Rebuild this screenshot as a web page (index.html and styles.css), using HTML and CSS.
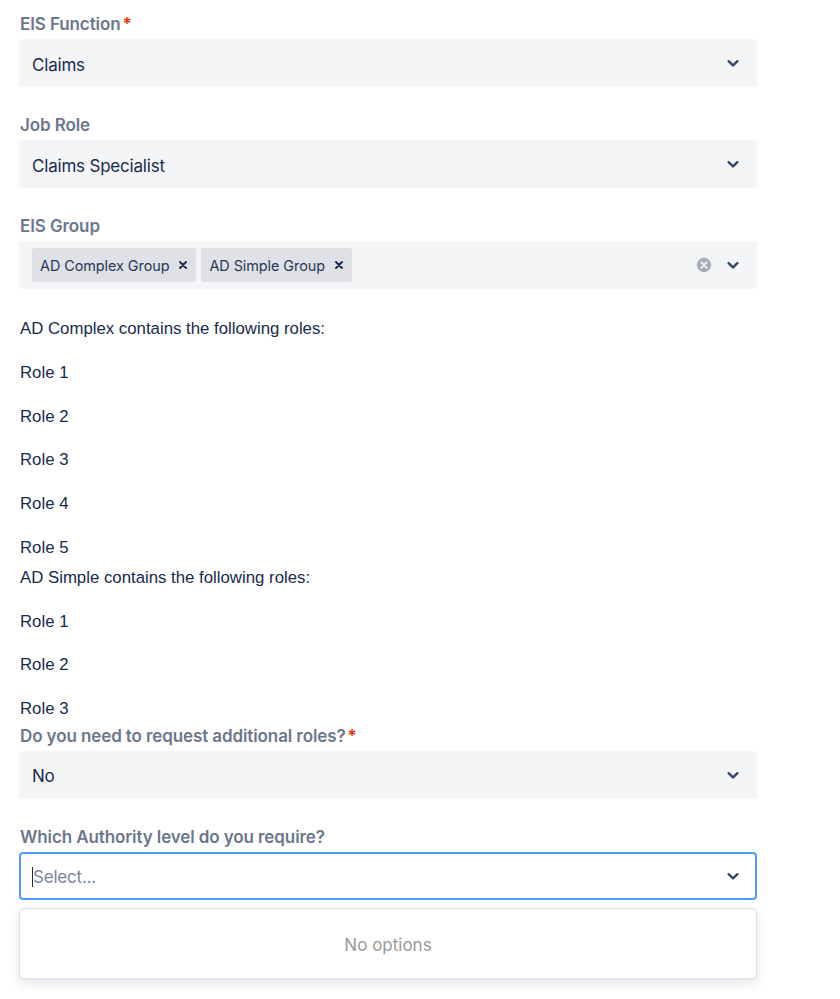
FILE: index.html
```html
<!DOCTYPE html>
<html>
<head>
<meta charset="utf-8">
<link rel="stylesheet" href="styles.css">
</head>
<body>
<form class="form">
  <div class="field">
    <label class="label">EIS Function<span class="req">*</span></label>
    <div class="select">
      <div class="value">Claims</div>
      <div class="indicators">
        <svg class="chev" viewBox="0 0 16 16" width="16" height="16"><path d="M3.6 6.2L8 10.4l4.4-4.2" fill="none" stroke="currentColor" stroke-width="2.4" stroke-linecap="round" stroke-linejoin="round"/></svg>
      </div>
    </div>
  </div>

  <div class="field">
    <label class="label">Job Role</label>
    <div class="select">
      <div class="value">Claims Specialist</div>
      <div class="indicators">
        <svg class="chev" viewBox="0 0 16 16" width="16" height="16"><path d="M3.6 6.2L8 10.4l4.4-4.2" fill="none" stroke="currentColor" stroke-width="2.4" stroke-linecap="round" stroke-linejoin="round"/></svg>
      </div>
    </div>
  </div>

  <div class="field">
    <label class="label">EIS Group</label>
    <div class="select multi">
      <div class="tags">
        <span class="tag">AD Complex Group<svg class="tag-x" viewBox="0 0 8 8" width="8" height="8"><path d="M1 1l6 6M7 1L1 7" stroke="currentColor" stroke-width="1.9" stroke-linecap="round"/></svg></span>
        <span class="tag">AD Simple Group<svg class="tag-x" viewBox="0 0 8 8" width="8" height="8"><path d="M1 1l6 6M7 1L1 7" stroke="currentColor" stroke-width="1.9" stroke-linecap="round"/></svg></span>
      </div>
      <div class="indicators">
        <svg class="clear" viewBox="0 0 16 16" width="16" height="16"><circle cx="8" cy="8" r="7.2" fill="#A5ADBA"/><path d="M5.5 5.5l5 5M10.5 5.5l-5 5" stroke="#F4F5F7" stroke-width="1.9" stroke-linecap="round"/></svg>
        <svg class="chev" viewBox="0 0 16 16" width="16" height="16"><path d="M3.6 6.2L8 10.4l4.4-4.2" fill="none" stroke="currentColor" stroke-width="2.4" stroke-linecap="round" stroke-linejoin="round"/></svg>
      </div>
    </div>
  </div>

  <div class="roles">
    <p>AD Complex contains the following roles:</p>
    <p>Role 1</p>
    <p>Role 2</p>
    <p>Role 3</p>
    <p>Role 4</p>
    <p>Role 5</p>
  </div>
  <div class="roles second">
    <p>AD Simple contains the following roles:</p>
    <p>Role 1</p>
    <p>Role 2</p>
    <p>Role 3</p>
  </div>

  <div class="field">
    <label class="label">Do you need to request additional roles?<span class="req">*</span></label>
    <div class="select">
      <div class="value">No</div>
      <div class="indicators">
        <svg class="chev" viewBox="0 0 16 16" width="16" height="16"><path d="M3.6 6.2L8 10.4l4.4-4.2" fill="none" stroke="currentColor" stroke-width="2.4" stroke-linecap="round" stroke-linejoin="round"/></svg>
      </div>
    </div>
  </div>

  <div class="field">
    <label class="label">Which Authority level do you require?</label>
    <div class="dropdown">
      <div class="select focused">
        <div class="value placeholder"><span class="caret"></span>Select...</div>
        <div class="indicators">
          <svg class="chev" viewBox="0 0 16 16" width="16" height="16"><path d="M3.6 6.2L8 10.4l4.4-4.2" fill="none" stroke="currentColor" stroke-width="2.4" stroke-linecap="round" stroke-linejoin="round"/></svg>
        </div>
      </div>
      <div class="menu">No options</div>
    </div>
  </div>
</form>
</body>
</html>
```

FILE: styles.css
```css
* { box-sizing: border-box; }
html, body { margin: 0; padding: 0; background: #fff; }
body {
  font-family: "Liberation Sans", Arial, sans-serif;
  color: #172B4D;
}
.form {
  width: 757px;
  padding: 12px 0 0 19px;
  display: flex;
  flex-direction: column;
}
.field { display: flex; flex-direction: column; margin-bottom: 26px; }
.label {
  font-family: "Inter", "Noto Sans", sans-serif;
  font-weight: 600;
  font-size: 17px;
  line-height: 24px;
  color: #6B778C;
  margin-bottom: 3px;
  padding-left: 1px;
  letter-spacing: -0.1px;
}
.req { color: #DE350B; margin-left: 2px; }
.select {
  height: 48px;
  background: #F4F5F7;
  border: 2px solid #F4F5F7;
  border-radius: 4px;
  display: flex;
  align-items: center;
  justify-content: space-between;
  padding: 0 14px 0 11px;
}
.value {
  font-family: "Inter", "Noto Sans", sans-serif;
  font-size: 17px;
  color: #172B4D;
  letter-spacing: -0.2px;
  padding-top: 3px;
}
.indicators { display: flex; align-items: center; gap: 13px; color: #344563; }
.chev { display: block; }
.clear { display: block; }
.multi { padding-left: 11px; }
.tags { display: flex; gap: 5px; }
.tag {
  display: flex;
  align-items: center;
  height: 34px;
  background: #DFE1E6;
  border-radius: 3px;
  padding: 0 9px 0 8px;
  font-family: "Inter", "Noto Sans", sans-serif;
  font-size: 14.4px;
  color: #253858;
  letter-spacing: -0.05px;
}
.tag-x { margin-left: 10px; color: #172B4D; }
.roles {
  font-size: 16.8px;
  line-height: 20px;
  display: flex;
  flex-direction: column;
  gap: 23.75px;
  padding-left: 1px;
  margin-top: 4px;
}
.roles p { margin: 0; }
.roles.second { margin-top: 10px; margin-bottom: 4.5px; }
.dropdown { display: flex; flex-direction: column; gap: 8.5px; }
.focused {
  background: #fff;
  border-color: #4C9AFF;
}
.placeholder { color: #7A869A; display: flex; align-items: center; padding-top: 2px; }
.caret {
  display: inline-block;
  width: 1px;
  height: 20px;
  background: #172B4D;
}
.menu {
  height: 71px;
  padding-top: 2px;
  border: 1px solid #DFE1E6;
  border-radius: 4px;
  box-shadow: 0 4px 11px rgba(9, 30, 66, 0.12);
  display: flex;
  align-items: center;
  justify-content: center;
  font-family: "Inter", "Noto Sans", sans-serif;
  font-size: 17px;
  color: #999;
}
```
